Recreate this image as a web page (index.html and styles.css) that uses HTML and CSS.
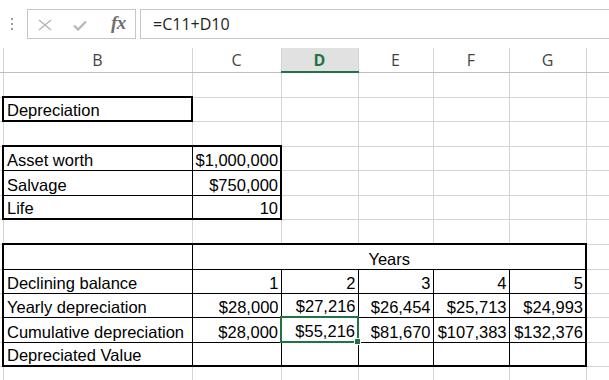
FILE: index.html
```html
<!DOCTYPE html>
<html>
<head>
<meta charset="utf-8">
<link rel="stylesheet" href="styles.css">
</head>
<body>
<div class="fbar">
  <div class="grip"><i></i><i></i><i></i></div>
  <div class="btns">
    <svg class="ico-x" width="16" height="12" viewBox="0 0 16 12"><path d="M2 1 L14 11 M14 1 L2 11" stroke="#b8b8b8" stroke-width="1.6" fill="none"/></svg>
    <svg class="ico-ok" width="14" height="11" viewBox="0 0 14 11"><path d="M1 5.5 L5 9.5 L13 1.5" stroke="#b8b8b8" stroke-width="2.4" fill="none"/></svg>
    <span class="fx">fx</span>
  </div>
  <div class="input">=C11+D10</div>
</div>
<table class="sheet">
  <colgroup>
    <col class="c0"><col class="cb"><col class="cc"><col class="cd"><col class="ce"><col class="cf"><col class="cg"><col class="ch">
  </colgroup>
  <thead>
    <tr class="hdr"><th class="rh"></th><th>B</th><th>C</th><th class="sel">D</th><th>E</th><th>F</th><th>G</th><th></th></tr>
  </thead>
  <tbody>
    <tr class="r25"><td class="rh"></td><td></td><td></td><td></td><td></td><td></td><td></td><td></td></tr>
    <tr class="r24"><td class="rh"></td><td class="box">Depreciation</td><td></td><td></td><td></td><td></td><td></td><td></td></tr>
    <tr class="r25"><td class="rh"></td><td></td><td></td><td></td><td></td><td></td><td></td><td></td></tr>
    <tr class="r24"><td class="rh"></td><td class="t tl ttop">Asset worth</td><td class="t num tr ttop">$1,000,000</td><td></td><td></td><td></td><td></td><td></td></tr>
    <tr class="r25"><td class="rh"></td><td class="t tl">Salvage</td><td class="t num tr">$750,000</td><td></td><td></td><td></td><td></td><td></td></tr>
    <tr class="r24"><td class="rh"></td><td class="t tl tbot">Life</td><td class="t num tr tbot">10</td><td></td><td></td><td></td><td></td><td></td></tr>
    <tr class="r25"><td class="rh"></td><td></td><td></td><td></td><td></td><td></td><td></td><td></td></tr>
    <tr class="r25"><td class="rh"></td><td class="t tl ttop"></td><td class="t ttop tr years" colspan="5">Years</td><td></td></tr>
    <tr class="r24"><td class="rh"></td><td class="t tl">Declining balance</td><td class="t num">1</td><td class="t num">2</td><td class="t num">3</td><td class="t num">4</td><td class="t num tr">5</td><td></td></tr>
    <tr class="r24"><td class="rh"></td><td class="t tl">Yearly depreciation</td><td class="t num">$28,000</td><td class="t num">$27,216</td><td class="t num">$26,454</td><td class="t num">$25,713</td><td class="t num tr">$24,993</td><td></td></tr>
    <tr class="r25"><td class="rh"></td><td class="t tl">Cumulative depreciation</td><td class="t num">$28,000</td><td class="t num active">$55,216<span class="handle"></span></td><td class="t num">$81,670</td><td class="t num">$107,383</td><td class="t num tr">$132,376</td><td></td></tr>
    <tr class="r24"><td class="rh"></td><td class="t tl tbot">Depreciated Value</td><td class="t tbot"></td><td class="t tbot"></td><td class="t tbot"></td><td class="t tbot"></td><td class="t tbot tr"></td><td></td></tr>
    <tr class="r25"><td class="rh"></td><td></td><td></td><td></td><td></td><td></td><td></td><td></td></tr>
  </tbody>
</table>
</body>
</html>
```

FILE: styles.css
```css
html, body {
  margin: 0;
  padding: 0;
  background: #ffffff;
  overflow: hidden;
  width: 609px;
  height: 380px;
}

.fbar {
  height: 48px;
  display: flex;
  align-items: flex-start;
  padding-top: 9px;
  box-sizing: border-box;
}

.grip {
  width: 27px;
  height: 29px;
  display: flex;
  flex-direction: column;
  align-items: center;
  justify-content: center;
  gap: 3px;
  padding-right: 3px;
  box-sizing: border-box;
}

.grip i {
  display: block;
  width: 2px;
  height: 2px;
  background: #9a9a9a;
}

.btns {
  width: 109px;
  height: 30px;
  border: 1px solid #c6c6c6;
  box-sizing: border-box;
  display: flex;
  align-items: center;
}

.ico-x {
  margin-left: 9px;
  margin-top: 1px;
}

.ico-ok {
  margin-left: 20px;
  margin-top: 3px;
}

.fx {
  margin-left: 24px;
  font-family: "Liberation Serif", serif;
  font-style: italic;
  font-weight: 700;
  font-size: 19px;
  color: #6e6e6e;
  letter-spacing: -0.5px;
  margin-top: -2px;
}

.input {
  flex: 1;
  margin-left: 4px;
  height: 30px;
  border: 1px solid #c6c6c6;
  border-right: none;
  box-sizing: border-box;
  padding-left: 12px;
  font-family: "Open Sans", sans-serif;
  font-size: 16px;
  line-height: 28px;
  color: #222;
}

.sheet {
  border-collapse: collapse;
  table-layout: fixed;
  width: 609px;
  font-family: "Liberation Sans", sans-serif;
  font-size: 16.5px;
  color: #000;
}

.c0 { width: 3px; }
.cb { width: 189px; }
.cc { width: 89px; }
.cd { width: 77px; }
.ce { width: 75px; }
.cf { width: 76px; }
.cg { width: 77px; }
.ch { width: 23px; }

.sheet th,
.sheet td {
  border: 1px solid #d4d4d4;
  padding: 0 2px 0 3px;
  white-space: nowrap;
  overflow: visible;
  vertical-align: bottom;
  box-sizing: border-box;
}

.sheet .rh {
  border-left: none;
  padding: 0;
}

.hdr th {
  height: 24px;
  font-family: "Open Sans", sans-serif;
  font-weight: 400;
  font-size: 16px;
  color: #444;
  vertical-align: middle;
  border-top: none;
  border-bottom: 1px solid #bdbdbd;
  text-align: center;
  padding: 0;
}

.hdr th.sel {
  background: #e1e1e1;
  color: #217346;
  font-weight: 700;
  border-bottom: 2px solid #217346;
}

.r25 td { height: 25px; line-height: 18px; padding-bottom: 1px; }
.r24 td { height: 24px; line-height: 18px; padding-bottom: 1px; }

.sheet td.box {
  border: 2px solid #000;
}

.sheet td.t {
  border: 1px solid #000;
}

.sheet td.tl { border-left: 2px solid #000; }
.sheet td.tr { border-right: 2px solid #000; }
.sheet td.ttop { border-top: 2px solid #000; }
.sheet td.tbot { border-bottom: 2px solid #000; }

.num { text-align: right; }
.years { text-align: center; }

.sheet td.active {
  border: 2px solid #217346;
  position: relative;
}

.handle {
  position: absolute;
  right: -4px;
  bottom: -4px;
  width: 5px;
  height: 5px;
  background: #217346;
  border: 1px solid #fff;
}
```
